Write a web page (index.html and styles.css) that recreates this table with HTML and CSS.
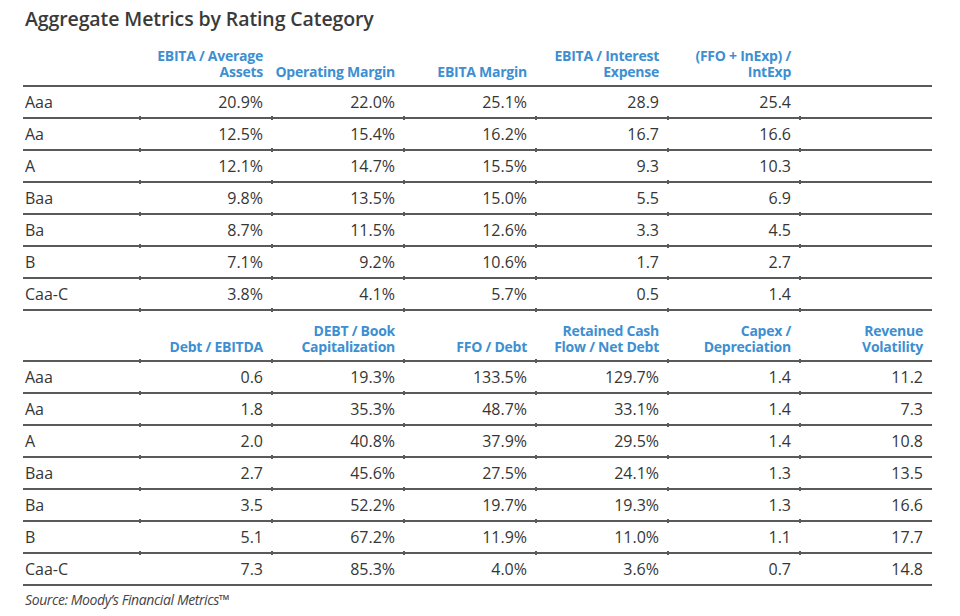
FILE: index.html
```html
<!DOCTYPE html>
<html lang="en">
<head>
<meta charset="utf-8">
<title>Aggregate Metrics by Rating Category</title>
<link rel="stylesheet" href="styles.css">
</head>
<body>
<div class="page">
  <h1 class="title">Aggregate Metrics by Rating Category</h1>

  <table class="metrics first">
    <colgroup>
      <col class="c-label"><col class="c-num"><col class="c-num"><col class="c-num"><col class="c-num"><col class="c-num"><col class="c-num">
    </colgroup>
    <thead>
      <tr>
        <th></th>
        <th>EBITA / Average<br>Assets</th>
        <th>Operating Margin</th>
        <th>EBITA Margin</th>
        <th>EBITA / Interest<br>Expense</th>
        <th>(FFO + InExp) /<br>IntExp</th>
        <th></th>
      </tr>
    </thead>
    <tbody>
      <tr><td>Aaa</td><td>20.9%</td><td>22.0%</td><td>25.1%</td><td>28.9</td><td>25.4</td><td></td></tr>
      <tr><td>Aa</td><td>12.5%</td><td>15.4%</td><td>16.2%</td><td>16.7</td><td>16.6</td><td></td></tr>
      <tr><td>A</td><td>12.1%</td><td>14.7%</td><td>15.5%</td><td>9.3</td><td>10.3</td><td></td></tr>
      <tr><td>Baa</td><td>9.8%</td><td>13.5%</td><td>15.0%</td><td>5.5</td><td>6.9</td><td></td></tr>
      <tr><td>Ba</td><td>8.7%</td><td>11.5%</td><td>12.6%</td><td>3.3</td><td>4.5</td><td></td></tr>
      <tr><td>B</td><td>7.1%</td><td>9.2%</td><td>10.6%</td><td>1.7</td><td>2.7</td><td></td></tr>
      <tr><td>Caa-C</td><td>3.8%</td><td>4.1%</td><td>5.7%</td><td>0.5</td><td>1.4</td><td></td></tr>
    </tbody>
  </table>

  <table class="metrics second">
    <colgroup>
      <col class="c-label"><col class="c-num"><col class="c-num"><col class="c-num"><col class="c-num"><col class="c-num"><col class="c-num">
    </colgroup>
    <thead>
      <tr>
        <th></th>
        <th>Debt / EBITDA</th>
        <th>DEBT / Book<br>Capitalization</th>
        <th>FFO / Debt</th>
        <th>Retained Cash<br>Flow / Net Debt</th>
        <th>Capex /<br>Depreciation</th>
        <th>Revenue<br>Volatility</th>
      </tr>
    </thead>
    <tbody>
      <tr><td>Aaa</td><td>0.6</td><td>19.3%</td><td>133.5%</td><td>129.7%</td><td>1.4</td><td>11.2</td></tr>
      <tr><td>Aa</td><td>1.8</td><td>35.3%</td><td>48.7%</td><td>33.1%</td><td>1.4</td><td>7.3</td></tr>
      <tr><td>A</td><td>2.0</td><td>40.8%</td><td>37.9%</td><td>29.5%</td><td>1.4</td><td>10.8</td></tr>
      <tr><td>Baa</td><td>2.7</td><td>45.6%</td><td>27.5%</td><td>24.1%</td><td>1.3</td><td>13.5</td></tr>
      <tr><td>Ba</td><td>3.5</td><td>52.2%</td><td>19.7%</td><td>19.3%</td><td>1.3</td><td>16.6</td></tr>
      <tr><td>B</td><td>5.1</td><td>67.2%</td><td>11.9%</td><td>11.0%</td><td>1.1</td><td>17.7</td></tr>
      <tr><td>Caa-C</td><td>7.3</td><td>85.3%</td><td>4.0%</td><td>3.6%</td><td>0.7</td><td>14.8</td></tr>
    </tbody>
  </table>

  <p class="source">Source: Moody’s Financial Metrics™</p>
</div>
</body>
</html>
```

FILE: styles.css
```css
html, body {
  margin: 0;
  padding: 0;
  background: #ffffff;
}

body {
  font-family: "Open Sans", "Liberation Sans", sans-serif;
  color: #363636;
}

.page {
  width: 909px;
  padding: 0 0 0 23px;
}

.title {
  margin: 0 0 5px 0;
  padding: 7px 0 0 2px;
  font-size: 19.5px;
  line-height: 24px;
  font-weight: 600;
  color: #3a3a3a;
  letter-spacing: -0.1px;
}

.metrics {
  width: 909px;
  border-collapse: collapse;
  table-layout: fixed;
}

.c-label { width: 117px; }
.c-num { width: 132px; }

.metrics th {
  height: 50px;
  box-sizing: border-box;
  padding: 0 9px 5px 0;
  vertical-align: bottom;
  text-align: right;
  white-space: nowrap;
  font-size: 14px;
  line-height: 16px;
  font-weight: 700;
  color: #3d8fd1;
  letter-spacing: -0.25px;
  border-bottom: 2px solid #5a5a5a;
  position: relative;
}

.metrics td {
  height: 30px;
  padding: 0 9px 0 0;
  text-align: right;
  white-space: nowrap;
  font-size: 16px;
  line-height: 20px;
  color: #363636;
  border-bottom: 2px solid #5a5a5a;
  position: relative;
}

.metrics td:first-child {
  text-align: left;
  padding: 0 0 0 2px;
}

/* small tick marks at the column joins on the rules */
.metrics td:not(:first-child)::before,
.second th:not(:first-child)::before {
  content: "";
  position: absolute;
  left: -1px;
  bottom: -3px;
  width: 2px;
  height: 4px;
  background: #5a5a5a;
}

.second tbody tr:last-child td::before {
  display: none;
}

.source {
  margin: 5px 0 0 2px;
  font-size: 14px;
  line-height: 18px;
  font-style: italic;
  color: #444444;
  letter-spacing: -0.4px;
}
```
